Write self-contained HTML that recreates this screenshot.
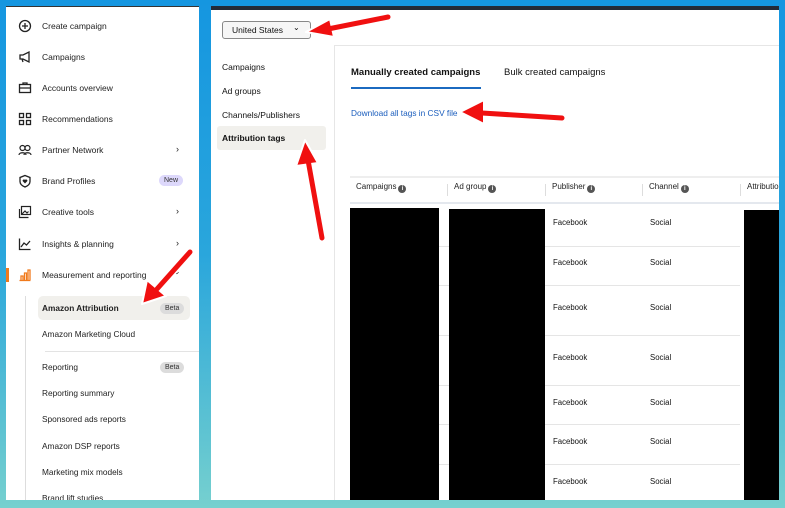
<!DOCTYPE html>
<html><head><style>
*{margin:0;padding:0;box-sizing:border-box}
body{width:785px;height:508px;overflow:hidden;background:linear-gradient(180deg,#1596e0 0%,#2aa6dc 50%,#5ec3d2 85%,#76d0cf 100%);font-family:"Liberation Sans",Arial,sans-serif;position:relative;color:#111}
.left{position:absolute;left:6px;top:6px;width:193px;height:494px;background:#fff;border-top:1px solid #333;overflow:hidden}
.item{position:absolute;left:0;font-size:8.5px;color:#222}
.item .ic{position:absolute;left:12px;top:-2px;width:14px;height:14px}
.item .t{position:absolute;left:36px;white-space:nowrap}
.chev{position:absolute;left:170px;font-size:9px}
.badge{position:absolute;border-radius:7px;font-size:7px;padding:2px 5px}
.sub{position:absolute;left:36px;font-size:8.3px;white-space:nowrap;color:#222}
.right{position:absolute;left:211px;top:6px;width:568px;height:494px;background:#fff;border-top:4px solid #232a36;overflow:hidden}
.sel{position:absolute;left:11px;top:11px;width:89px;height:18px;border:1px solid #888;border-radius:3px;background:#f6f6f6;font-size:8.5px;padding:3px 0 0 9px}
.nav{position:absolute;left:11px;font-size:8.5px}
.main{position:absolute;left:123px;top:35px;width:460px;height:460px;border-left:1px solid #e6e6e6;border-top:1px solid #e6e6e6}
.th{position:absolute;top:172px;font-size:8px;color:#222}
.info{display:inline-block;width:8px;height:8px;border-radius:50%;background:#555;color:#fff;font-size:6px;text-align:center;line-height:8px;vertical-align:-1px;margin-left:2px;font-weight:bold}
.cell{position:absolute;font-size:7.8px}
.hl{position:absolute;left:139px;height:1px;background:#e5e5e5;width:390px}
</style></head><body>
<div class="left">
 <div class="item" style="top:14px"><svg class="ic" viewBox="0 0 14 14"><circle cx="7" cy="7" r="5.5" fill="none" stroke="#222" stroke-width="1.3"/><path d="M7 4v6M4 7h6" stroke="#222" stroke-width="1.3"/></svg><span class="t">Create campaign</span></div>
 <div class="item" style="top:45px"><svg class="ic" viewBox="0 0 14 14"><path d="M2 5h3l6-3v10l-6-3H2zM4 9l1 3" fill="none" stroke="#222" stroke-width="1.3"/></svg><span class="t">Campaigns</span></div>
 <div class="item" style="top:76px"><svg class="ic" viewBox="0 0 14 14"><rect x="1.5" y="3.5" width="11" height="8" fill="none" stroke="#222" stroke-width="1.3"/><path d="M5 3.5V2h4v1.5M1.5 7h11" stroke="#222" stroke-width="1.3" fill="none"/></svg><span class="t">Accounts overview</span></div>
 <div class="item" style="top:107px"><svg class="ic" viewBox="0 0 14 14"><g fill="none" stroke="#222" stroke-width="1.3"><rect x="1.5" y="1.5" width="4" height="4"/><rect x="8.5" y="1.5" width="4" height="4"/><rect x="1.5" y="8.5" width="4" height="4"/><rect x="8.5" y="8.5" width="4" height="4"/></g></svg><span class="t">Recommendations</span></div>
 <div class="item" style="top:138px"><svg class="ic" viewBox="0 0 14 14"><g fill="none" stroke="#222" stroke-width="1.2"><circle cx="4.5" cy="5" r="2.5"/><circle cx="9.5" cy="5" r="2.5"/><path d="M1 12c0-3 7-3 7 0M6 12c0-3 7-3 7 0"/></g></svg><span class="t">Partner Network</span><span class="chev" style="top:-1px">›</span></div>
 <div class="item" style="top:169px"><svg class="ic" viewBox="0 0 14 14"><path d="M7 1.5l5 2v4c0 3-2.5 4.5-5 5.5-2.5-1-5-2.5-5-5.5v-4z" fill="none" stroke="#222" stroke-width="1.3"/><path d="M7 9.5L4.8 7.3a1.2 1.2 0 0 1 2.2-1.2 1.2 1.2 0 0 1 2.2 1.2z" fill="#222"/></svg><span class="t">Brand Profiles</span><span class="badge" style="left:153px;top:-1px;background:#ddd8fb;color:#333">New</span></div>
 <div class="item" style="top:200px"><svg class="ic" viewBox="0 0 14 14"><g fill="none" stroke="#222" stroke-width="1.2"><rect x="3.5" y="1.5" width="9" height="8"/><path d="M1.5 4v8.5h9M4 9l3-3 2 2 1.5-1.5"/></g></svg><span class="t">Creative tools</span><span class="chev" style="top:-1px">›</span></div>
 <div class="item" style="top:232px"><svg class="ic" viewBox="0 0 14 14"><path d="M1.5 1.5v11h11M3 10l3-4 2.5 2L12 4" fill="none" stroke="#222" stroke-width="1.3"/></svg><span class="t">Insights &amp; planning</span><span class="chev" style="top:-1px">›</span></div>
 <div style="position:absolute;left:0;top:261px;width:3px;height:14px;background:#f07a1c"></div>
 <div class="item" style="top:263px"><svg class="ic" viewBox="0 0 14 14"><path d="M1.5 12.5h11M3 12V8h2v4M6.5 12V5h2v7M10 12V2h2v10" fill="none" stroke="#f07a1c" stroke-width="1.3"/></svg><span class="t">Measurement and reporting</span><span class="chev" style="top:-2px;transform:rotate(90deg)">›</span></div>
 <div style="position:absolute;left:19px;top:289px;width:1px;height:210px;background:#ddd"></div>
 <div style="position:absolute;left:32px;top:289px;width:152px;height:24px;background:#f1f0ec;border-radius:5px"></div>
 <div class="sub" style="top:296px;font-weight:bold">Amazon Attribution</div>
 <span class="badge" style="left:154px;top:296px;background:#dcdcdc;color:#333">Beta</span>
 <div class="sub" style="top:322px">Amazon Marketing Cloud</div>
 <div style="position:absolute;left:39px;top:344px;width:160px;height:1px;background:#e3e3e3"></div>
 <div class="sub" style="top:355px">Reporting</div>
 <span class="badge" style="left:154px;top:355px;background:#dcdcdc;color:#333">Beta</span>
 <div class="sub" style="top:381px">Reporting summary</div>
 <div class="sub" style="top:407px">Sponsored ads reports</div>
 <div class="sub" style="top:434px">Amazon DSP reports</div>
 <div class="sub" style="top:460px">Marketing mix models</div>
 <div class="sub" style="top:486px">Brand lift studies</div>
</div>
<div class="right">
 <div class="sel">United States <span style="position:absolute;left:70px;top:1px;font-size:8px">⌄</span></div>
 <div class="nav" style="top:52px">Campaigns</div>
 <div class="nav" style="top:76px">Ad groups</div>
 <div class="nav" style="top:100px">Channels/Publishers</div>
 <div style="position:absolute;left:6px;top:116px;width:109px;height:24px;background:#f1f0ec;border-radius:3px"></div>
 <div class="nav" style="top:123px;font-weight:bold">Attribution tags</div>
 <div class="main"></div>
 <div style="position:absolute;left:140px;top:57px;font-size:9.5px;font-weight:bold">Manually created campaigns</div>
 <div style="position:absolute;left:140px;top:77px;width:130px;height:2px;background:#1b6ac0"></div>
 <div style="position:absolute;left:293px;top:57px;font-size:9.5px">Bulk created campaigns</div>
 <div style="position:absolute;left:140px;top:98px;font-size:8.3px;color:#1a5dbd">Download all tags in CSV file</div>
 <div style="position:absolute;left:139px;top:166px;width:440px;height:28px;background:#fff;border-top:2px solid #eee;border-bottom:2px solid #e4e8ee"></div>
 <div class="th" style="left:145px">Campaigns<span class="info">i</span></div>
 <div class="th" style="left:243px">Ad group<span class="info">i</span></div>
 <div class="th" style="left:341px">Publisher<span class="info">i</span></div>
 <div class="th" style="left:438px">Channel<span class="info">i</span></div>
 <div class="th" style="left:536px">Attribution</div>
 <div style="position:absolute;left:236px;top:174px;width:1px;height:12px;background:#ddd"></div>
 <div style="position:absolute;left:334px;top:174px;width:1px;height:12px;background:#ddd"></div>
 <div style="position:absolute;left:431px;top:174px;width:1px;height:12px;background:#ddd"></div>
 <div style="position:absolute;left:529px;top:174px;width:1px;height:12px;background:#ddd"></div>
 <div class="hl" style="top:236px"></div><div class="hl" style="top:275px"></div><div class="hl" style="top:325px"></div><div class="hl" style="top:375px"></div><div class="hl" style="top:414px"></div><div class="hl" style="top:454px"></div>
 <div class="cell" style="left:342px;top:208px">Facebook</div><div class="cell" style="left:439px;top:208px">Social</div>
 <div class="cell" style="left:342px;top:248px">Facebook</div><div class="cell" style="left:439px;top:248px">Social</div>
 <div class="cell" style="left:342px;top:293px">Facebook</div><div class="cell" style="left:439px;top:293px">Social</div>
 <div class="cell" style="left:342px;top:343px">Facebook</div><div class="cell" style="left:439px;top:343px">Social</div>
 <div class="cell" style="left:342px;top:388px">Facebook</div><div class="cell" style="left:439px;top:388px">Social</div>
 <div class="cell" style="left:342px;top:427px">Facebook</div><div class="cell" style="left:439px;top:427px">Social</div>
 <div class="cell" style="left:342px;top:467px">Facebook</div><div class="cell" style="left:439px;top:467px">Social</div>
 <div style="position:absolute;left:139px;top:198px;width:89px;height:292px;background:#000"></div>
 <div style="position:absolute;left:238px;top:199px;width:96px;height:292px;background:#000"></div>
 <div style="position:absolute;left:533px;top:200px;width:40px;height:294px;background:#000"></div>
</div>
<svg style="position:absolute;left:0;top:0" width="785" height="508">
 <g stroke-linecap="round">
  <g stroke="#fff" stroke-width="8"><line x1="388" y1="17" x2="328" y2="29"/><line x1="562" y1="118" x2="482" y2="113"/><line x1="322" y1="238" x2="308" y2="160"/><line x1="190" y1="252" x2="157" y2="289"/></g>
  <path d="M306,32 L330,19 L334,37z M460,112 L484,100 L484,124z M305,140 L296,166 L318,163z M142,304 L147,280 L166,296z" fill="#f01010" stroke="#fff" stroke-width="2" stroke-linejoin="round"/>
  <g stroke="#f01010" stroke-width="5"><line x1="388" y1="17" x2="328" y2="29"/><line x1="562" y1="118" x2="482" y2="113"/><line x1="322" y1="238" x2="308" y2="160"/><line x1="190" y1="252" x2="157" y2="289"/></g>
 </g>
</svg>
</body></html>
